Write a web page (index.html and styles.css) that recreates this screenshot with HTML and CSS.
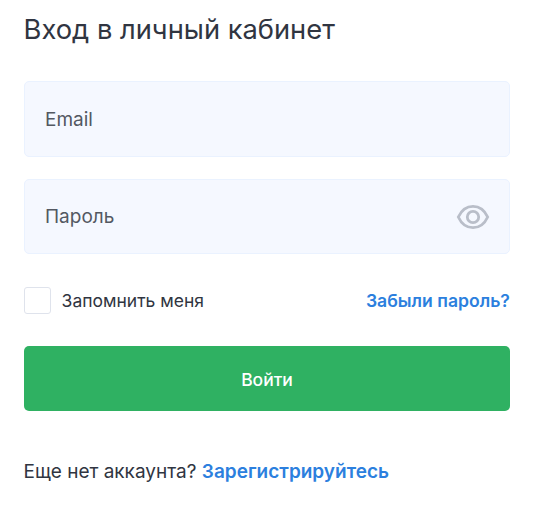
FILE: index.html
```html
<!DOCTYPE html>
<html lang="ru">
<head>
<meta charset="utf-8">
<title>Вход</title>
<link rel="stylesheet" href="styles.css">
</head>
<body>
<main class="login">
  <h1 class="title">Вход в личный кабинет</h1>
  <div class="field"><span>Email</span></div>
  <div class="field"><span>Пароль</span>
    <svg class="eye" viewBox="0 0 34 26" fill="none" stroke="#b9bec9" stroke-width="2.8"><path d="M2.300 13C5.500 6 10.500 2.300 17 2.300S28.500 6 31.700 13C28.500 20 23.500 23.700 17 23.700S5.500 20 2.300 13Z"/><circle cx="17" cy="13" r="5.700"/></svg>
  </div>
  <div class="options">
    <label class="remember"><span class="box"></span><span>Запомнить меня</span></label>
    <a class="link">Забыли пароль?</a>
  </div>
  <button class="submit">Войти</button>
  <p class="register">Еще нет аккаунта? <a class="link">Зарегистрируйтесь</a></p>
</main>
</body>
</html>
```
FILE: styles.css
```css
* { box-sizing: border-box; }
body { margin: 0; background: #fff; color: #303541; font-family: Inter, "Liberation Sans", sans-serif; }
.login { padding: 12px 26.6px 0 23.6px; }
.title { margin: 0 0 33px; font-size: 27.300px; line-height: 36px; font-weight: 430; white-space: nowrap; }
.field { height: 75.600px; margin-bottom: 22px; padding: 1px 19.500px 0 20.400px; display: flex; align-items: center; justify-content: space-between; border: 1px solid #eaf2ff; border-radius: 5px; background: #f5f8ff; font-size: 19px; color: #535862; }
.eye { width: 34px; height: 26px; }
.options { display: flex; align-items: center; justify-content: space-between; height: 27px; margin-top: 32.600px; font-size: 17.500px; }
.remember { display: flex; align-items: center; gap: 11px; }
.box { width: 27px; height: 27px; border: 1px solid #dfe3ec; border-radius: 3px; }
.link { color: #2c7fde; font-weight: 600; }
.options .link { margin-right: 0.500px; font-size: 17.600px; }
.submit { display: block; width: 100%; height: 65px; margin-top: 32.600px; padding: 1px 0 0; border: 0; border-radius: 5px; background: #2fb162; color: #fff; font: 500 17.500px Inter, sans-serif; }
.register { margin: 48.200px 0 0; font-size: 19px; line-height: 24px; white-space: nowrap; }
```
